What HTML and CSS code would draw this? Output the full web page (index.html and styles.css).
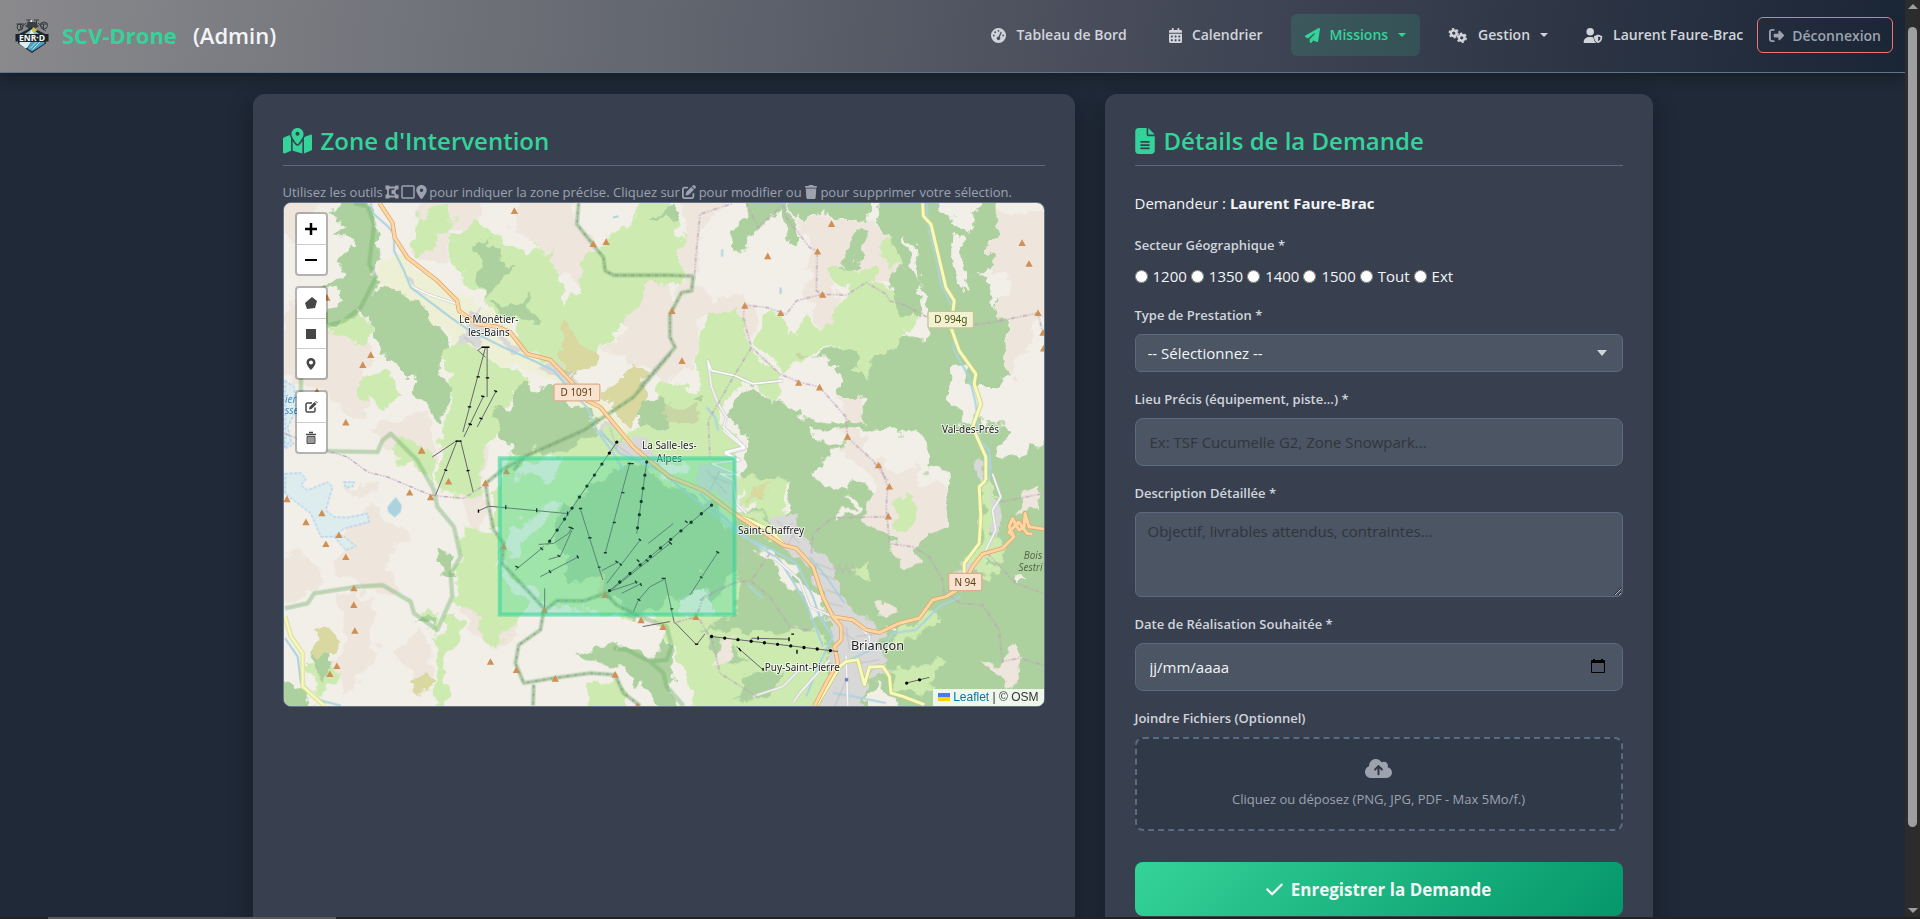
FILE: index.html
```html
<!DOCTYPE html>
<html lang="fr">
<head>
<meta charset="utf-8">
<meta name="viewport" content="width=device-width, initial-scale=1">
<title>SCV-Drone - Nouvelle mission</title>
<link rel="stylesheet" href="styles.css">
</head>
<body>

<div class="window">
<div class="page">

<header class="navbar">
  <a class="brand" href="#">
    <svg class="brand-logo" viewBox="0 0 68 70">
      <g stroke="#343a3c" stroke-width="2" fill="none">
        <path d="M3 12h15M22 4h10M38 4h10M50 12h15M11 12v9M57 12v9M22 10l-10 9M46 10l10 9M20 16h28M28 5v10M43 5v10M6 26l8-5M62 26l-8-5"/>
        <circle cx="10" cy="18" r="6"/><circle cx="58" cy="15" r="7"/>
      </g>
      <path fill="#394043" d="M25 8h18l3 9-6 5H28l-6-5z"/>
      <path fill="#eee" d="M31 4h3v4h-3z"/>
      <path fill="#202c33" d="M34 18L62 33v18L34 70 6 51V33z"/>
      <path fill="#8fb9b4" d="M34 22l19 13H15z"/>
      <path fill="#d4c13e" d="M36 18l9 6-7 5-5-4z"/>
      <path fill="#e8f4f2" d="M32 23l8 11-6-3-6 4z"/>
      <path fill="#d8eef0" d="M9 48h23l-7 11-4 2L9 52z"/>
      <path fill="#4aa0c0" d="M32 48h27v3L34 67l-9-6z"/>
      <path stroke="#b8e2ec" stroke-width="2" d="M30 61l13-13M35 63l15-15"/>
      <path fill="#1b2329" d="M1 32h66v15H1z"/>
      <text class="brand-mark" x="34" y="45">ENR·D</text>
    </svg>
    <span class="brand-name">SCV-Drone</span>
    <span class="brand-role">(Admin)</span>
  </a>
  <nav class="nav-links">
    <a class="nav-link" href="#">
      <svg class="icon" viewBox="0 0 512 512"><path d="M0 256a256 256 0 1 1 512 0A256 256 0 1 1 0 256zM288 96a32 32 0 1 0 -64 0 32 32 0 1 0 64 0zM256 416c35.3 0 64-28.7 64-64c0-17.4-6.9-33.1-18.1-44.6L366 161.7c5.3-12.1-.2-26.3-12.3-31.6s-26.3 .2-31.6 12.3L257.9 288c-.6 0-1.3 0-1.9 0c-35.3 0-64 28.7-64 64s28.7 64 64 64zM176 144a32 32 0 1 0 -64 0 32 32 0 1 0 64 0zM96 288a32 32 0 1 0 0-64 32 32 0 1 0 0 64zm352-32a32 32 0 1 0 -64 0 32 32 0 1 0 64 0z"/></svg>
      Tableau de Bord
    </a>
    <a class="nav-link" href="#">
      <svg class="icon" viewBox="0 0 448 512"><path d="M128 0c17.7 0 32 14.3 32 32V64H288V32c0-17.7 14.3-32 32-32s32 14.3 32 32V64h48c26.5 0 48 21.5 48 48v48H0V112C0 85.5 21.5 64 48 64H96V32c0-17.7 14.3-32 32-32zM0 192H448V464c0 26.5-21.5 48-48 48H48c-26.5 0-48-21.5-48-48V192zm64 80v32c0 8.8 7.2 16 16 16h32c8.8 0 16-7.2 16-16V272c0-8.8-7.2-16-16-16H80c-8.8 0-16 7.2-16 16zm128 0v32c0 8.8 7.2 16 16 16h32c8.8 0 16-7.2 16-16V272c0-8.8-7.2-16-16-16H208c-8.8 0-16 7.2-16 16zm144-16c-8.8 0-16 7.2-16 16v32c0 8.8 7.2 16 16 16h32c8.8 0 16-7.2 16-16V272c0-8.8-7.2-16-16-16H336zM64 400v32c0 8.8 7.2 16 16 16h32c8.8 0 16-7.2 16-16V400c0-8.8-7.2-16-16-16H80c-8.8 0-16 7.2-16 16zm144-16c-8.8 0-16 7.2-16 16v32c0 8.8 7.2 16 16 16h32c8.8 0 16-7.2 16-16V400c0-8.8-7.2-16-16-16H208zm112 16v32c0 8.8 7.2 16 16 16h32c8.8 0 16-7.2 16-16V400c0-8.8-7.2-16-16-16H336c-8.8 0-16 7.2-16 16z"/></svg>
      Calendrier
    </a>
    <a class="nav-link active" href="#">
      <svg class="icon" viewBox="0 0 512 512"><path d="M498.1 5.6c10.1 7 15.4 19.1 13.5 31.2l-64 416c-1.5 9.7-7.4 18.2-16 23s-18.9 5.4-28 1.6L284 427.7l-68.5 74.1c-8.9 9.7-22.9 12.9-35.2 8.1S160 493.2 160 480V396.4c0-4 1.5-7.8 4.2-10.7L331.8 202.8c5.8-6.3 5.6-16-.4-22s-15.7-6.4-22-.7L106 360.8 17.7 316.6C7.1 311.3 .3 300.7 0 288.9s5.9-22.8 16.1-28.7l448-256c10.7-6.1 23.9-5.5 34 1.4z"/></svg>
      Missions <span class="caret"></span>
    </a>
    <a class="nav-link" href="#">
      <svg class="icon icon-wide" viewBox="0 0 20 16">
        <g fill="none" stroke="currentColor">
          <circle cx="5.5" cy="5.5" r="3" stroke-width="2.6"/>
          <circle cx="5.5" cy="5.5" r="4.8" stroke-width="1.6" stroke-dasharray="2.5 2.5"/>
          <circle cx="14" cy="10.5" r="3" stroke-width="2.6"/>
          <circle cx="14" cy="10.5" r="4.8" stroke-width="1.6" stroke-dasharray="2.5 2.5"/>
        </g>
      </svg>
      Gestion <span class="caret"></span>
    </a>
    <a class="nav-link nav-user" href="#">
      <svg class="icon icon-wide" viewBox="0 0 640 512"><path d="M224 256A128 128 0 1 0 224 0a128 128 0 1 0 0 256zm-45.7 48C79.8 304 0 383.8 0 482.3C0 498.7 13.3 512 29.7 512H418c6 0 12-1 17-5-62-40-92-104-92-184l-75-19zM496 224l-124 50c-10 4-16 12-16 22 0 88 36 174 130 212 6 3 14 3 20 0 94-38 130-124 130-212 0-10-6-18-16-22zm0 62l82 33c-4 60-28 110-82 140z" fill-rule="evenodd"/></svg>
      <span>Laurent Faure-Brac</span>
    </a>
    <button class="logout" type="button">
      <svg class="icon" viewBox="0 0 512 512"><path d="M377.9 105.9L500.7 228.7c7.2 7.2 11.3 17.1 11.3 27.3s-4.1 20.1-11.3 27.3L377.9 406.1c-6.4 6.4-15 9.9-24 9.9c-18.7 0-33.9-15.2-33.9-33.9l0-62.1-128 0c-17.7 0-32-14.3-32-32l0-64c0-17.7 14.3-32 32-32l128 0 0-62.1c0-18.7 15.2-33.9 33.9-33.9c9 0 17.6 3.6 24 9.9zM160 96L96 96c-17.7 0-32 14.3-32 32l0 256c0 17.7 14.3 32 32 32l64 0c17.7 0 32 14.3 32 32s-14.3 32-32 32l-64 0c-53 0-96-43-96-96L0 128C0 75 43 32 96 32l64 0c17.7 0 32 14.3 32 32s-14.3 32-32 32z"/></svg>
      Déconnexion
    </button>
  </nav>
</header>

<main class="container">

  <section class="card">
    <h2 class="card-title">
      <svg class="title-icon" viewBox="0 0 576 512"><path d="M408 120c0 54.6-73.1 151.9-105.2 192c-7.7 9.6-22 9.6-29.6 0C241.1 271.9 168 174.6 168 120C168 53.7 221.7 0 288 0s120 53.7 120 120zm8 80.4c3.5-6.9 6.7-13.8 9.6-20.6c.5-1.2 1-2.5 1.5-3.7l116-46.4C558.9 123.4 576 135 576 152V422.8c0 9.8-6 18.6-15.1 22.3L416 503V200.4zM137.6 138.3c2.4 14.1 7.2 28.3 12.8 41.5c2.9 6.8 6.1 13.7 9.6 20.6V451.8L32.9 502.7C17.1 509 0 497.4 0 480.4V209.6c0-9.8 6-18.6 15.1-22.3l122.6-49zM327.8 332c13.9-17.4 35.7-45.7 56.2-77V504.3L192 449.4V255c20.5 31.3 42.3 59.6 56.2 77c20.5 25.6 59.1 25.6 79.6 0zM288 152a40 40 0 1 0 0-80 40 40 0 1 0 0 80z"/></svg>
      Zone d'Intervention
    </h2>
    <p class="help">Utilisez les outils
      <svg class="help-icon" viewBox="0 0 14 14"><path d="M3 2.500h9L8.500 7l3.500 4.500H3z" fill="none" stroke="currentColor" stroke-width="1.800"/><path d="M.5.5h4v4h-4zM10 .5h3.500v4H10zM.5 9.500h4v4h-4zM10 9.500h3.500v4H10zM6.500 5h4v4h-4z"/></svg>
      <svg class="help-icon" viewBox="0 0 14 14"><rect x="1" y="1" width="12" height="12" rx="1" fill="none" stroke="currentColor" stroke-width="1.5"/></svg>
      <svg class="help-icon narrow" viewBox="0 0 384 512"><path d="M215.7 499.2C267 435 384 279.4 384 192C384 86 298 0 192 0S0 86 0 192c0 87.4 117 243 168.3 307.2c12.3 15.3 35.1 15.3 47.4 0zM192 128a64 64 0 1 1 0 128 64 64 0 1 1 0-128z"/></svg>
      pour indiquer la zone précise. Cliquez sur
      <svg class="help-icon" viewBox="0 0 512 512"><path d="M471.6 21.7c-21.9-21.9-57.3-21.9-79.2 0L362.3 51.7l97.9 97.9 30.1-30.1c21.9-21.9 21.9-57.3 0-79.2L471.6 21.7zm-299.2 220c-6.1 6.1-10.8 13.6-13.5 21.9l-29.6 88.8c-2.9 8.6-.6 18.1 5.8 24.6s15.9 8.7 24.6 5.8l88.8-29.6c8.2-2.7 15.7-7.4 21.9-13.5L437.7 172.3 339.7 74.3 172.4 241.7zM96 64C43 64 0 107 0 160V416c0 53 43 96 96 96H352c53 0 96-43 96-96V320c0-17.7-14.3-32-32-32s-32 14.3-32 32v96c0 17.7-14.3 32-32 32H96c-17.7 0-32-14.3-32-32V160c0-17.7 14.3-32 32-32h96c17.7 0 32-14.3 32-32s-14.3-32-32-32H96z"/></svg>
      pour modifier ou
      <svg class="help-icon" viewBox="0 0 448 512"><path d="M135.2 17.7L128 32H32C14.3 32 0 46.3 0 64S14.3 96 32 96H416c17.7 0 32-14.3 32-32s-14.3-32-32-32H320l-7.2-14.3C307.4 6.8 296.3 0 284.2 0H163.8c-12.1 0-23.2 6.8-28.6 17.7zM416 128H32L53.2 467c1.6 25.3 22.6 45 47.9 45H346.9c25.3 0 46.3-19.7 47.9-45L416 128z"/></svg>
      pour supprimer votre sélection.</p>

    <div class="map">
      <svg class="map-tiles" viewBox="0 0 2286 1515" preserveAspectRatio="xMinYMin slice">
        <defs>
          <filter id="rough" x="0" y="0" width="1" height="1" color-interpolation-filters="sRGB">
            <feTurbulence type="fractalNoise" baseFrequency="0.018" numOctaves="4" seed="7"/>
            <feDisplacementMap in="SourceGraphic" scale="70" xChannelSelector="R" yChannelSelector="G"/>
          </filter>
        </defs>
        <rect width="2286" height="1515" fill="#f2efe9"/>

        <g filter="url(#rough)">
        <!-- land cover, north west -->
        <g transform="translate(-99 -336)">
          <path fill="#eee5dc" d="M500 306L690 306 700 440 600 400 590 500 540 520 480 480 520 420zM820 306L960 306 975 400 1060 520 1080 560 1000 610 960 540 900 560 860 470 780 400zM72 306L220 306 180 420 140 440 72 420zM110 620L240 720 330 740 360 800 340 860 380 920 300 980 220 900 72 860zM360 1010L540 960 560 1140 430 1100zM1100 560L1260 560 1260 900 1190 820 1080 800 1060 760 1130 720z"/>
          <path fill="#eef0d5" d="M390 500L450 490 520 550 600 600 660 620 740 670 830 770 900 795 980 860 1080 950 1160 1060 1260 1120 1260 1140 1060 1100 960 900 860 850 760 820 640 780 580 720 480 630 380 590z"/>
          <path fill="#cdebb0" d="M600 420L690 400 740 440 830 490 850 460 880 500 910 470 920 560 950 640 1000 590 1060 600 1100 720 1040 780 960 850 900 800 840 790 800 700 740 680 700 620 640 560 600 540 595 470zM1000 500L1080 440 1160 380 1180 306 1260 306 1260 560 1180 580 1130 700 1050 730 980 680zM560 780L620 750 700 780 760 820 830 870 780 930 740 1020 700 1080 620 1140 560 1060 600 960 600 860zM480 400L560 350 600 340 600 400 560 450 500 500zM230 720L330 660 360 720 330 780 290 740zM320 880L410 840 450 900 400 950 330 930z"/>
          <path fill="#add19e" d="M240 380L290 306 350 306 370 400 400 490 360 540 390 570 340 640 300 700 230 710 200 680 280 620 210 580 290 560 260 500 320 470 250 430 300 410zM330 620L380 600 460 600 540 680 590 760 560 860 600 890 580 990 500 920 480 860 400 780 350 700zM730 950L780 960 800 870 880 890 1010 960 1070 1040 1000 1070 900 1110 820 1140 770 1060zM670 470L715 445 760 480 740 520 795 530 730 570 710 620 680 590 690 510zM720 620L790 660 850 600 830 660 860 690 770 690z"/>
          <path fill="#d8d8a0" d="M940 710L980 730 1010 780 1050 800 1020 850 960 840 925 770zM1080 890L1150 810 1195 850 1170 960 1130 1010 1075 930z"/>
          <path fill="#d9d8d8" d="M655 650L690 645 720 690 770 740 820 770 810 790 760 760 690 740 640 770 620 740 665 710zM900 810L960 830 990 870 960 880 900 850 850 830zM455 555L490 570 495 600 470 590zM1040 1010L1080 1000 1150 1050 1190 1110 1140 1140 1070 1060z"/>
        </g>

        <!-- land cover, north east -->
        <g transform="translate(1071 -156)">
          <path fill="#eee5dc" d="M130 126L280 126 180 250 180 400 230 450 310 430 340 470 330 600 240 480 180 500 170 640 100 700 60 560 110 430 130 370zM470 210L540 205 700 210 760 260 820 210 860 400 840 440 740 380 700 400 600 390 590 520 540 540 490 430 520 300z"/>
          <path fill="#cdebb0" d="M0 126L100 190 110 240 135 260 120 390 0 370zM210 480L300 480 320 560 340 600 430 680 400 750 300 700 250 760 260 830 310 890 180 990 0 990 0 830 60 700 180 720 175 570zM340 570L380 480 440 510 460 560 500 500 540 545 620 430 700 370 760 420 820 480 810 560 740 640 690 640 675 690 640 650 600 590 520 600 500 640 430 670zM570 360L620 340 660 350 700 360 715 400 660 410 600 400z"/>
          <path fill="#add19e" d="M320 126L430 126 480 250 460 285 440 260 430 170 355 230 300 300 275 240 320 190zM430 126L700 126 690 210 560 200 470 205zM600 350L640 250 690 240 670 320 630 350zM720 126L1090 126 1090 190 1060 230 1050 330 1100 520 1110 600 1120 690 1010 710 930 660 960 830 1110 820 1250 890 1250 990 920 990 860 880 760 830 670 830 680 740 600 730 590 640 520 610 600 590 650 600 640 650 675 690 690 640 800 570 870 570 840 500 790 480 750 400 760 370 790 350 770 300 715 210zM270 800L320 720 480 780 490 840 600 960 640 990 300 990 340 880zM0 760L80 730 90 800 60 860 0 860zM30 200L100 170 110 190 90 210zM160 740L200 735 190 770z"/>
          <path fill="#f2efe9" d="M790 250L830 300 850 420 875 560 850 570 830 460 850 410 820 340zM945 250L975 260 985 400 1000 420 960 420 945 330zM920 126L1030 126 990 240 900 190zM1000 370L1060 330 1100 400 1060 480 1050 380zM930 660L980 640 1005 780 960 820 930 740zM1020 710L1140 690 1200 660 1250 660 1250 780 1080 810 1060 760z"/>
          <path fill="#eee5dc" d="M1090 190L1250 180 1250 500 1180 520 1150 620 1120 690 1100 640 1110 520 1060 500 1100 400 1050 320 1060 230zM600 740L660 730 690 860 860 850 800 900 860 1020 740 1010 690 940 620 860z"/>
          <path fill="#f2efe9" d="M1060 360L1100 350 1110 430 1070 450zM750 880L830 870 860 960 780 960zM500 700L600 750 610 850 530 830 480 740 430 700z"/>
          <path fill="#cdebb0" d="M725 250L750 260 780 320 790 350 750 360 730 300z"/>
          <path fill="#c8d5a4" d="M70 770L180 765 170 800 130 825 90 800zM475 610L510 605 500 622 478 620z"/>
        </g>

        <!-- land cover, south west -->
        <g transform="translate(-39 684)">
          <path fill="#eee5dc" d="M230 290L300 210 330 250 420 320 370 340 360 420 400 500 290 480 190 440 220 360zM200 500L260 480 310 520 290 600 320 640 240 800 180 700 240 640zM370 680L440 600 480 610 480 740 430 740zM580 520L740 530 730 600 700 650 640 640 590 600zM12 380L100 370 160 440 90 510 12 530zM500 60L660 60 640 160 640 300 600 320 580 200zM220 170L330 160 320 200 240 200z"/>
          <path fill="#cdebb0" d="M550 310L660 300 690 350 680 400 700 450 780 520 760 560 700 600 690 650 650 640 600 540 550 510 545 430 580 380zM500 610L560 540 580 600 530 700 520 860 490 860zM340 50L440 30 490 70 490 160 430 90 390 110zM520 50L640 40 640 180 600 200 520 200 500 160zM660 180L720 80 1000 0 1401 0 1401 560 1100 560 830 530 700 400 670 260zM1180 560L1401 560 1401 860 1280 860 1230 700zM950 760L1040 740 1100 860 960 860zM100 720L200 680 200 760 150 800zM450 560L490 540 500 600z"/>
          <path fill="#add19e" d="M990 150L1060 100 1130 110 1180 150 1290 190 1401 290 1401 420 1310 540 1200 500 1150 540 1100 560 1010 500 990 440 900 440 870 400 900 370 840 330 880 220 950 190zM930 660L1030 640 1140 690 1200 620 1215 680 1190 740 1250 860 1180 860 1120 760 1090 780 1070 720 1000 710zM12 740L100 770 150 860 12 860zM130 620L180 640 200 700 160 760 110 700zM500 360L540 370 545 440 510 430zM440 560L490 560 480 590zM800 60L930 0 970 0 880 60 820 80z"/>
          <path fill="#d8d8a0" d="M130 590L170 600 210 640 150 680 120 690zM410 740L490 740 480 800 440 790zM990 430L1010 440 1000 500 980 480z"/>
          <path fill="#f2efe9" d="M750 90L880 90 850 150 740 140zM700 340L780 240 880 220 800 300 720 400zM1240 500L1330 480 1330 555 1240 555zM1160 90L1250 110 1220 150 1170 130z"/>
          <path fill="#d9d8d8" d="M1040 30L1080 20 1180 90 1150 110 1080 80zM1290 120L1380 130 1401 230 1330 200 1280 150z"/>
        </g>

        <!-- land cover, south east -->
        <g transform="translate(1251 684)">
          <path fill="#add19e" d="M130 -30L835 -20 860 60 900 100 950 90 1000 80 1075 50 1075 861 600 861 300 861 0 600 110 560 110 240 270 250 280 130 180 100z"/>
          <path fill="#cdebb0" d="M110 130L200 150 270 140 250 260 180 250 120 200zM110 240L200 260 280 300 320 370 250 360zM0 600L240 610 350 600 400 680 340 861 0 861zM560 650L690 540 715 560 680 600 640 630 560 680zM560 720L740 700 690 760 720 780 600 780zM870 130L900 200 870 300 920 390 880 430 790 440 800 390 850 340 850 180zM460 420L500 390 515 450 490 450zM30 430L0 420 0 410z"/>
          <path fill="#add19e" d="M20 640L60 620 80 660 150 680 60 700zM120 740L250 720 200 800 120 820zM860 380L900 400 880 420z"/>
          <path fill="#f2efe9" d="M330 0L640 0 690 60 680 120 750 140 740 250 650 300 620 280 560 200 480 150 450 190 400 150 370 160 330 140 360 100 400 90 400 60 440 50 350 30zM400 250L460 240 420 200 480 220 460 260 400 275zM160 370L200 360 300 430 380 550 340 570 300 480zM950 -20L1075 -20 1075 20 950 80 890 65zM960 430L1000 460 960 460zM500 800L540 750 580 800 640 861 500 861z"/>
          <path fill="#eee5dc" d="M400 0L460 0 500 20 500 80 560 100 600 150 640 100 670 160 740 180 740 290 680 310 650 360 660 410 600 400 560 350 600 340 500 260 520 150 450 80zM540 510L560 490 600 560 540 550zM830 690L900 700 950 650 970 740 930 770 900 740zM970 190L1020 180 1010 240 955 245zM40 660L90 625 95 680 50 715z"/>
          <path fill="#cdebb0" d="M580 210L620 195 670 220 650 280 600 305z"/>
          <path fill="#d8d8a0" d="M165 175L210 165 190 200 180 215 145 205z"/>
          <path fill="#d9d8d8" d="M210 255L280 260 330 340 390 400 440 520 470 560 560 600 540 640 560 730 500 760 480 861 350 861 400 700 390 560 340 420 270 370zM0 110L80 120 110 200 110 240 60 210zM750 440L810 400 840 430 760 470zM880 180L910 300 890 330 870 240zM835 100L860 110 850 200 838 160z"/>
        </g>
        </g>

        <!-- lakes and glaciers -->
        <g transform="translate(-39 684)">
          <path fill="#aad3df" d="M350 230L375 200 393 225 390 245 372 262 352 245z"/>
          <path fill="#ddecec" stroke="#94c4f4" stroke-width="3" stroke-dasharray="9 5" d="M42 130L90 128 105 145 90 165 110 180 170 155 185 170 165 240 190 260 230 262 290 250 295 275 220 295 190 320 150 320 120 250 42 190zM192 322L215 315 255 348 225 360zM218 155L250 155 245 170 225 172zM42 20L70 40 42 55z"/>
          <path transform="translate(-60 -1020)" fill="#ddecec" stroke="#94c4f4" stroke-width="3" stroke-dasharray="9 5" d="M102 870L130 890 135 960 110 1010 120 1050 102 1070z"/>
        </g>

        <!-- rivers -->
        <g class="river">
          <path transform="translate(-99 -336)" d="M360 336L365 365 410 405 430 430 430 480 460 540 480 590 560 650 600 680 650 715 760 770 860 815 910 840 960 900 1010 950 1040 1020 1090 1090 1120 1140M1088 380L1105 376"/>
          <path transform="translate(1071 -156)" d="M860 156L870 240 890 320 905 400 940 470 945 600 990 680 1010 760 1020 860 1050 930 1050 990M247 295V318M423 410V430M200 770L225 800 235 840"/>
          <path transform="translate(-39 684)" d="M990 0L1050 70 1170 120 1240 180 1330 250 1401 310M42 625L80 680 90 760 140 810 210 828"/>
          <path transform="translate(1251 684)" d="M0 190L70 260 130 320 220 360 290 400 340 500 360 560 400 620 360 700 320 800M40 230L150 330 240 390 320 520 370 650M330 380L380 440 435 520M785 500L720 530 690 560 650 600 580 610 560 640 450 690M835 20L870 60 875 120M145 465L190 505M400 790L460 800 560 820"/>
        </g>

        <!-- minor roads -->
        <g class="road-casing">
          <path transform="translate(1071 -156)" d="M203 628L215 660 285 675 340 700 430 690M203 628L215 710 235 760 260 800 250 830 315 890 255 905 300 930"/>
          <path transform="translate(1251 684)" d="M70 0L135 55 75 70 120 90 35 100 120 135 60 130 100 150 110 220 140 250M220 380L300 450 330 530 400 560M880 130L905 200 880 240 890 300 860 360M160 800L250 770 320 700M280 820L300 790 390 690M480 590L510 620 512 650M440 675L445 831M590 600L560 590"/>
          <path transform="translate(-99 -336)" d="M490 590L530 610 620 640M950 865L970 845"/>
        </g>
        <g class="road-minor">
          <path transform="translate(1071 -156)" d="M203 628L215 660 285 675 340 700 430 690M203 628L215 710 235 760 260 800 250 830 315 890 255 905 300 930"/>
          <path transform="translate(1251 684)" d="M70 0L135 55 75 70 120 90 35 100 120 135 60 130 100 150 110 220 140 250M220 380L300 450 330 530 400 560M880 130L905 200 880 240 890 300 860 360M160 800L250 770 320 700M280 820L300 790 390 690M480 590L510 620 512 650M440 675L445 831M590 600L560 590"/>
          <path transform="translate(-99 -336)" d="M490 590L530 610 620 640M950 865L970 845"/>
        </g>
        <g class="street">
          <path transform="translate(1251 684)" d="M230 270L300 340M250 300L280 280M290 300L260 350M350 400L400 420M360 430L410 450M380 480L440 500M390 520L430 530M420 600L480 640M440 590L450 660M470 620L540 610M480 700L540 690M500 740L540 700M20 120L80 190M40 140L90 160M60 120L30 180M400 405L410 430 420 405 430 430 440 405 450 430 460 405 470 430M405 831L445 740"/>
          <path transform="translate(-99 -336)" d="M660 660L700 700M690 650L670 690M640 740L670 760M910 820L970 860M930 840L980 850M1050 1030L1150 1100M1080 1010L1100 1080M1120 1040L1090 1080"/>
        </g>

        <!-- park and administrative limits -->
        <g class="park">
          <path transform="translate(-99 -336)" d="M310 336L350 345 370 400 355 520 375 560 330 650 280 690 230 705M150 860V1000M985 336L980 400 1060 500 1065 540 1090 553 1260 553M1260 790L1150 920 1000 1020 820 1100 790 1140"/>
          <path transform="translate(1071 -156)" d="M90 373L160 376 155 420 125 425 90 490 90 560 105 590 0 710"/>
          <path transform="translate(-39 684)" d="M170 62L320 65 335 30 360 10 440 90 490 180 500 230 550 290 570 380 540 430 545 500 500 600 430 550 420 515 335 465 260 470 130 490 110 520 42 535M760 85L700 115 645 160 655 230 670 300 700 340 695 400 770 480 825 540 860 512 940 513 1005 490 1040 525 1110 560 1190 590 1205 650 1190 690 1140 695 1070 660 1030 655M820 545L810 600 745 645 735 700 760 760 850 745 960 730 1035 735 1060 790 1110 828M790 765L788 828M1140 695L1180 730 1190 770 1240 828"/>
        </g>
        <g class="limit-dark">
          <path transform="translate(-99 -336)" d="M985 336L980 400 1060 500 1065 540 1090 553 1260 553M1260 790L1150 920 1000 1020 820 1100 790 1140"/>
          <path transform="translate(1071 -156)" d="M90 373L160 376 155 420 125 425 90 490 90 560 105 590 0 710"/>
          <path transform="translate(-39 684)" d="M760 85L700 115 645 160 655 230 670 300 700 340 695 400 770 480 825 540 860 512 940 513 1005 490 1040 525 1110 560M820 545L810 600 745 645 735 700 760 760 850 745 960 730 1035 735 1060 790 1110 828M790 765L788 828"/>
        </g>
        <g class="limit">
          <path transform="translate(1071 -156)" d="M163 370L180 190 280 156M320 156L355 230 430 160 440 200 510 290 533 300 530 420 549 430 620 433 680 395 740 430 750 450 800 465 865 500M549 430L470 450 440 490 380 470 315 463 310 500 335 590 420 670 480 695 540 710 620 800 622 860 700 930 745 990M335 590L280 680 205 810 210 920M1005 522L1060 515 1196 487 1210 540"/>
          <path transform="translate(1251 684)" d="M540 100L565 170 560 230 570 340 640 350 690 380 730 450 735 500M335 370L340 310 400 262 565 260M740 490L785 520 850 525 900 600 910 695 960 685 1032 705M865 370L950 460 1032 490M905 215L1032 190M210 370L155 450 100 460 0 510M155 455L210 500 270 590 350 605M0 570L40 640 60 730 170 800"/>
          <path transform="translate(-39 684)" d="M42 10L170 62 230 80 290 125 350 140 480 195 580 205 640 165M1401 455L1300 500 1280 560 1210 580"/>
        </g>

        <!-- main roads -->
        <g class="road-yellow-casing">
          <path transform="translate(1071 -156)" d="M850 156L852 195 875 220 920 410 945 450 935 530 960 600 1010 670 1005 700 1025 760 1000 830 1040 920 1040 990"/>
          <path transform="translate(1251 684)" d="M860 150L840 170 845 260 840 340 795 400 795 430M420 710L440 695 475 690 495 765 510 712 550 710 570 740 575 790 610 800 675 825M100 250L160 275 210 300 250 340M420 710L350 828"/>
          <path transform="translate(-39 684)" d="M42 560L60 620 95 670 95 770 160 828"/>
        </g>
        <g class="road-yellow">
          <path transform="translate(1071 -156)" d="M850 156L852 195 875 220 920 410 945 450 935 530 960 600 1010 670 1005 700 1025 760 1000 830 1040 920 1040 990"/>
          <path transform="translate(1251 684)" d="M860 150L840 170 845 260 840 340 795 400 795 430M420 710L440 695 475 690 495 765 510 712 550 710 570 740 575 790 610 800 675 825M100 250L160 275 210 300 250 340M420 710L350 828"/>
          <path transform="translate(-39 684)" d="M42 560L60 620 95 670 95 770 160 828"/>
        </g>
        <g class="road-orange-casing">
          <path d="M287 0L326 59 333 104 371 164 461 234 521 294 526 324 581 364 641 372 681 389 731 454 801 472 861 534 911 594 951 614 1051 734 1081 760 1161 824 1261 864 1362 940 1501 1029 1541 1039 1591 1094 1621 1184 1651 1244 1711 1254 1751 1284 1791 1292 1851 1264 1911 1249 1951 1194 1991 1184 2041 1154 2071 1094 2101 1056 2161 1039 2196 1004 2181 974 2191 949 2211 984 2226 974 2229 934 2241 974 2286 981M2196 1004L2180 990 2210 960 2235 994 2251 996M1651 1244L1676 1274 1676 1314 1656 1334 1666 1384 1631 1444 1596 1512"/>
        </g>
        <g class="road-orange">
          <path d="M287 0L326 59 333 104 371 164 461 234 521 294 526 324 581 364 641 372 681 389 731 454 801 472 861 534 911 594 951 614 1051 734 1081 760 1161 824 1261 864 1362 940 1501 1029 1541 1039 1591 1094 1621 1184 1651 1244 1711 1254 1751 1284 1791 1292 1851 1264 1911 1249 1951 1194 1991 1184 2041 1154 2071 1094 2101 1056 2161 1039 2196 1004 2181 974 2191 949 2211 984 2226 974 2229 934 2241 974 2286 981M2196 1004L2180 990 2210 960 2235 994 2251 996M1651 1244L1676 1274 1676 1314 1656 1334 1666 1384 1631 1444 1596 1512"/>
        </g>

        <!-- ski lifts -->
        <g class="lift">
          <path transform="translate(-39 684)" d="M1040 35L830 345M1130 95L1100 310M1325 225L1012 487M1080 95L1005 370M655 228L890 250M655 228L622 243M930 235L998 450M735 420L820 350M810 440L925 380M1010 460L1110 330M1055 490L1115 460M1015 487L1200 340M995 422L1045 395M1015 485L1105 455M1090 545L1105 510 1140 470 1185 447 1212 575 1280 645 1305 612M1260 495L1345 365M823 475L823 540M805 343L850 340 895 310 905 290M835 388L870 378 905 300M1118 590L1200 575M485 80L560 30 495 195M570 30L608 185M1135 340L1210 280"/>
          <path transform="translate(-99 -336)" d="M705 770L637 1025M710 770L710 920M700 915L640 1040M738 900L680 1010M680 780L695 770H715M705 800L683 780"/>
          <path transform="translate(1251 684)" d="M35 620L415 665M110 650L190 720M620 760L690 743M155 625L270 628"/>
        </g>
        <g class="pylon">
          <path transform="translate(-39 684)" d="M1040 35L830 345M1130 95L1100 310M1325 225L1012 487"/>
          <path transform="translate(1251 684)" d="M35 620L415 665M622 760L690 743"/>
        </g>
        <path class="tick" transform="translate(-39 684)" d="M1073 100h18M1054 187h9M1028 277h9M1001 368h9M706 225v12M799 234v12M892 244v12M624 238v10M926 235h10M954 323h10M983 411h8M735 408l10 5M810 352l8 8M836 420l6 9M920 376l5 9M1106 326l7 6M1048 400l7 6M1196 334l10 9M1127 388l8 7M1100 388l8 7M1095 452l5 8M1110 460l5 8M1102 507l9 5M1175 445h12M1201 537h9M1275 643h10M1290 440l8 4M1339 364l9 5M862 375l8 5M895 290l15 6M521 118l9 3M588 122l9-2M555 32h18M1036 392l8 7M1245 272l8 6"/>
        <path class="tick" transform="translate(-99 -336)" d="M693 770h24M678 859h10M706 862h10M652 949h10M692 916l10 3M654 1000l10 3M731 900l9 4M687 982l9 4"/>
        <path class="tick" transform="translate(1251 684)" d="M175 620v10M268 622v12M275 613h8M292 660v12M117 655l6 9M190 715v8"/>
        <path fill="#7080b8" d="M1687 1429h10v10h-10z"/>

        <!-- summits -->
        <g fill="#d08f55">
          <path transform="translate(-99 -336)" d="M792 349l11 20h-22zM1029 448l11 20h-22zM1068 442l11 20h-22zM360 782l11 20h-22zM336 812l11 20h-22zM198 892l11 20h-22zM285 985l11 20h-22zM513 1069l11 20h-22zM228 610l11 20h-22z"/>
          <path transform="translate(1071 -156)" d="M576 208l11 20h-22zM534 291l11 20h-22zM384 305l11 20h-22zM549 421l11 20h-22zM315 454l11 20h-22zM423 476l11 20h-22zM96 470l11 20h-22zM126 620l11 20h-22zM477 686l11 20h-22zM540 700l11 20h-22zM624 848l11 20h-22zM717 934l11 20h-22zM1149 265l11 20h-22zM1170 328l11 20h-22zM1197 476l11 20h-22zM1212 535l11 20h-22zM1214 583l11 20h-22z"/>
          <path transform="translate(-39 684)" d="M453 50l11 20h-22zM534 143l11 20h-22zM645 148l11 20h-22zM708 112l11 20h-22zM417 176l11 20h-22zM480 190l11 20h-22zM48 196l11 20h-22zM153 238l11 20h-22zM105 265l11 20h-22zM204 304l11 20h-22zM165 331l11 20h-22zM225 370l11 20h-22zM249 464l11 20h-22zM249 514l11 20h-22zM252 592l11 20h-22zM198 698l11 20h-22zM177 722l11 20h-22zM660 685l11 20h-22zM738 710l11 20h-22zM855 736l11 20h-22zM1035 724l11 20h-22zM1005 484l11 20h-22zM822 530l11 20h-22zM699 338l11 20h-22zM1113 560l11 20h-22zM1179 580l11 20h-22zM1278 550l11 20h-22zM1102 818l11 20h-22z"/>
          <path transform="translate(1251 684)" d="M570 158l11 20h-22zM567 248l11 20h-22z"/>
        </g>

        <!-- labels -->
        <g class="place">
          <text x="616" y="362">Le Monêtier-</text>
          <text x="616" y="401">les-Bains</text>
          <text x="1159" y="741">La Salle-les-</text>
          <text x="1159" y="780">Alpes</text>
          <text x="2065" y="691">Val-des-Prés</text>
          <text x="1465" y="996">Saint-Chaffrey</text>
          <text x="1559" y="1408">Puy-Saint-Pierre</text>
          <text class="town" x="1785" y="1344">Briançon</text>
        </g>
        <g class="area-name">
          <text x="2225" y="1071">Bois</text>
          <text x="2209" y="1106">Sestri</text>
        </g>
        <g class="glacier-name">
          <text x="3" y="602">ier</text>
          <text x="3" y="636">sse</text>
        </g>
        <g class="shield">
          <rect x="812" y="545" width="138" height="50" rx="5"/>
          <text x="881" y="581">D 1091</text>
          <rect x="1999" y="1114" width="100" height="52" rx="5"/>
          <text x="2049" y="1151">N 94</text>
        </g>
        <g class="shield shield-yellow">
          <rect x="1937" y="326" width="137" height="50" rx="5"/>
          <text x="2006" y="362">D 994g</text>
        </g>

        <rect class="selection" x="649" y="768" width="706" height="470"/>
      </svg>

      <div class="map-controls">
        <div class="map-bar">
          <button type="button" title="Zoom avant"><svg viewBox="0 0 14 14"><path d="M1 7h12M7 1v12" stroke="#000" stroke-width="2.5"/></svg></button>
          <button type="button" title="Zoom arrière"><svg viewBox="0 0 14 14"><path d="M1 7h12" stroke="#000" stroke-width="2"/></svg></button>
        </div>
        <div class="map-bar">
          <button type="button" title="Polygone"><svg viewBox="0 0 14 14"><path d="M8 1l5 4-2 7-8 1-2-6z" fill="#464646"/></svg></button>
          <button type="button" title="Rectangle"><svg viewBox="0 0 14 14"><path d="M2 2h10v10H2z" fill="#464646"/></svg></button>
          <button type="button" title="Marqueur"><svg viewBox="0 0 14 14"><path d="M7 1a4.500 4.500 0 0 0-4.500 4.500C2.500 8.500 7 13 7 13s4.500-4.500 4.500-7.500A4.500 4.500 0 0 0 7 1zm0 2.500a2 2 0 1 1 0 4 2 2 0 0 1 0-4z" fill="#464646"/></svg></button>
        </div>
        <div class="map-bar">
          <button type="button" title="Modifier"><svg viewBox="0 0 14 14"><path d="M8 3H3.500Q2 3 2 4.500v6Q2 12 3.500 12h6q1.500 0 1.500-1.500V7.500" fill="none" stroke="#464646" stroke-width="1.5"/><path d="M5 9.500l.5-2.500L10.500 2l2 2-5 5z" fill="#464646"/><path d="M11.500 1l2 2" stroke="#464646"/></svg></button>
          <button type="button" title="Supprimer"><svg viewBox="0 0 14 14"><path d="M5 1.500h4M2 3.500h10" stroke="#464646" stroke-width="1.5"/><path d="M3 5.500h8v7H3z" fill="#999" stroke="#555"/></svg></button>
        </div>
      </div>

      <div class="attribution">
        <svg class="flag" viewBox="0 0 12 8"><path fill="#4c7be1" d="M0 0h12v4H0z"/><path fill="#ffd500" d="M0 4h12v4H0z"/></svg>
        <a href="#">Leaflet</a> | © OSM
      </div>
    </div>
  </section>

  <section class="card">
    <h2 class="card-title">
      <svg class="title-icon title-icon-file" viewBox="0 0 384 512"><path fill-rule="evenodd" d="M64 0C28.7 0 0 28.7 0 64V448c0 35.3 28.7 64 64 64H320c35.3 0 64-28.7 64-64V160H256c-17.7 0-32-14.3-32-32V0H64zM256 0V128H384L256 0zM112 256H272c8.8 0 16 7.2 16 16s-7.2 16-16 16H112c-8.8 0-16-7.2-16-16s7.2-16 16-16zm0 64H272c8.8 0 16 7.2 16 16s-7.2 16-16 16H112c-8.8 0-16-7.2-16-16s7.2-16 16-16zm0 64H272c8.8 0 16 7.2 16 16s-7.2 16-16 16H112c-8.8 0-16-7.2-16-16s7.2-16 16-16z"/></svg>
      Détails de la Demande
    </h2>

    <form class="request">
      <p class="requester">Demandeur : <strong>Laurent Faure-Brac</strong></p>

      <fieldset class="field">
        <legend class="label">Secteur Géographique *</legend>
        <div class="radios">
          <label><input type="radio" name="secteur"> 1200</label>
          <label><input type="radio" name="secteur"> 1350</label>
          <label><input type="radio" name="secteur"> 1400</label>
          <label><input type="radio" name="secteur"> 1500</label>
          <label><input type="radio" name="secteur"> Tout</label>
          <label><input type="radio" name="secteur"> Ext</label>
        </div>
      </fieldset>

      <div class="field">
        <label class="label" for="type">Type de Prestation *</label>
        <div class="select-wrap">
          <select class="control select" id="type">
            <option>-- Sélectionnez --</option>
          </select>
        </div>
      </div>

      <div class="field">
        <label class="label" for="lieu">Lieu Précis (équipement, piste...) *</label>
        <input class="control" type="text" id="lieu" placeholder="Ex: TSF Cucumelle G2, Zone Snowpark...">
      </div>

      <div class="field">
        <label class="label" for="description">Description Détaillée *</label>
        <textarea class="control textarea" id="description" placeholder="Objectif, livrables attendus, contraintes..."></textarea>
      </div>

      <div class="field">
        <label class="label" for="date">Date de Réalisation Souhaitée *</label>
        <div class="date-wrap">
          <input class="control date" type="text" id="date" placeholder="jj/mm/aaaa">
          <button class="date-button" type="button" title="Choisir une date">
            <svg viewBox="0 0 14 16"><path fill="#000" fill-rule="evenodd" d="M2 1h2v1h6V1h2v1h1q1 0 1 1v11q0 1-1 1H1q-1 0-1-1V3q0-1 1-1h1zM1 5v9h12V5z"/></svg>
          </button>
        </div>
      </div>

      <div class="field">
        <label class="label" for="files">Joindre Fichiers (Optionnel)</label>
        <label class="dropzone" for="files">
          <svg class="cloud" viewBox="0 32 640 448"><path d="M144 480C64.5 480 0 415.5 0 336c0-62.8 40.2-116.2 96.2-135.9c-.1-2.7-.2-5.4-.2-8.1c0-88.4 71.6-160 160-160c59.3 0 111 32.2 138.7 80.2C409.9 102 428.3 96 448 96c53 0 96 43 96 96c0 12.2-2.3 23.8-6.4 34.6C596 238.4 640 290.1 640 352c0 70.7-57.3 128-128 128H144zm79-217c-9.4 9.4-9.4 24.6 0 33.9s24.6 9.4 33.9 0l39-39V392c0 13.3 10.7 24 24 24s24-10.7 24-24V257.9l39 39c9.4 9.4 24.6 9.4 33.9 0s9.4-24.6 0-33.9l-80-80c-9.4-9.4-24.6-9.4-33.9 0l-80 80z"/></svg>
          Cliquez ou déposez (PNG, JPG, PDF - Max 5Mo/f.)
        </label>
        <input type="file" id="files" multiple hidden>
      </div>

      <button class="submit" type="submit">
        <svg class="check" viewBox="0 0 448 512"><path d="M438.6 105.4c12.5 12.5 12.5 32.8 0 45.3l-256 256c-12.5 12.5-32.8 12.5-45.3 0l-128-128c-12.5-12.5-12.5-32.8 0-45.3s32.8-12.5 45.3 0L160 338.7 393.4 105.4c12.5-12.5 32.8-12.5 45.3 0z"/></svg>
        Enregistrer la Demande
      </button>
    </form>
  </section>

</main>
</div>

<div class="scrollbar">
  <span class="arrow arrow-up"></span>
  <span class="thumb"></span>
  <span class="arrow arrow-down"></span>
</div>
</div>

<div class="taskbar"><span class="taskbar-item"></span></div>

</body>
</html>
```

FILE: styles.css
```css
* {
  box-sizing: border-box;
}

body {
  margin: 0;
  height: 100vh;
  display: flex;
  flex-direction: column;
  overflow: hidden;
  background: #1f2937;
  color: #f3f4f6;
  font-family: "Open Sans", "Noto Sans", sans-serif;
  font-size: 15px;
  line-height: 24px;
}

button, input, select, textarea {
  font-family: inherit;
  font-size: inherit;
  color: inherit;
}

button {
  cursor: pointer;
}

a {
  text-decoration: none;
}

.window {
  flex: 1;
  min-height: 0;
  display: flex;
}

.page {
  flex: 1;
  overflow: hidden;
}

/* navbar */
.navbar {
  position: relative;
  display: flex;
  align-items: center;
  justify-content: space-between;
  height: 73px;
  padding: 0 12px 2px 15px;
  background: linear-gradient(97deg, #8a8a8d 0%, #5d616b 40%, #434857 62%, #1a2535 100%);
  border-bottom: 1px solid #64748b;
  box-shadow: 0 4px 12px rgba(0, 0, 0, 0.3);
}

.brand {
  display: flex;
  align-items: center;
  font-size: 22px;
  font-weight: 700;
}

.brand-logo {
  width: 34px;
  height: 35px;
  margin-right: 13px;
}

.brand-mark {
  fill: #fff;
  font-size: 17px;
  font-weight: 700;
  text-anchor: middle;
}

.brand-name {
  color: #34d399;
  margin-right: 16px;
}

.brand-role {
  color: #f3f4f6;
  font-weight: 600;
}

.nav-links {
  display: flex;
  align-items: center;
  font-size: 14px;
  font-weight: 600;
}

.nav-link {
  display: flex;
  align-items: center;
  gap: 10px;
  height: 42px;
  padding: 0 14px;
  margin-right: 14px;
  border-radius: 6px;
  color: #d1d5db;
}

.nav-link.active {
  color: #34d399;
  background: rgba(52, 211, 153, 0.15);
}

.nav-user {
  margin-right: 0;
  padding-left: 7px;
}

.icon {
  height: 15px;
  fill: currentColor;
}

.icon-wide {
  width: 20px;
}

.caret {
  border: 4px solid transparent;
  border-top-color: currentColor;
  border-bottom: 0;
}

.logout {
  display: flex;
  align-items: center;
  gap: 8px;
  height: 36px;
  padding: 0 11px;
  border: 1px solid #f87171;
  border-radius: 6px;
  background: transparent;
  color: #9ca3af;
  font-weight: 600;
}

/* layout */
.container {
  display: grid;
  grid-template-columns: 3fr 2fr;
  gap: 30px;
  max-width: 1400px;
  margin: 21px auto 0;
}

.card {
  min-width: 0;
  padding: 30px;
  background: #384050;
  border-radius: 12px;
  box-shadow: 0 8px 24px rgba(0, 0, 0, 0.3);
}

.card-title {
  display: flex;
  align-items: center;
  gap: 9px;
  margin: 0 0 16px;
  padding-bottom: 8px;
  border-bottom: 1px solid #5a6b7d;
  color: #34d399;
  font-size: 24px;
  font-weight: 600;
  line-height: 33px;
}

.title-icon {
  width: 29px;
  height: 26px;
  fill: currentColor;
}

.title-icon-file {
  width: 20px;
}

/* map */
.help {
  margin: 0;
  color: #9ca3af;
  font-size: 13px;
  line-height: 20px;
}

.help-icon {
  width: 14px;
  height: 14px;
  margin: 0 -1px;
  fill: currentColor;
  vertical-align: -2px;
}

.help-icon.narrow {
  width: 11px;
}

.map {
  position: relative;
  height: 505px;
  border: 1px solid #64748b;
  border-radius: 8px;
  overflow: hidden;
}

.map-tiles {
  display: block;
  width: 100%;
  height: 100%;
  font-family: "Noto Sans", sans-serif;
  font-size: 30px;
}

.map-tiles g {
  stroke-linejoin: round;
}

.river { fill: none; stroke: #aad3df; stroke-width: 6; }
.road-casing { fill: none; stroke: #bbb; stroke-width: 8; }
.road-minor { fill: none; stroke: #fff; stroke-width: 5; }
.street { fill: none; stroke: #b5b5b5; stroke-width: 2; }
.park { fill: none; stroke: #6fae68; stroke-width: 13; opacity: 0.4; }
.limit-dark { fill: none; stroke: #8c9c88; stroke-width: 4; stroke-dasharray: 12 4 4 4; }
.limit { fill: none; stroke: #bda4bd; stroke-width: 4; stroke-dasharray: 14 5 4 5 4 5; }
.road-yellow-casing { fill: none; stroke: #c9cc74; stroke-width: 13; }
.road-yellow { fill: none; stroke: #f7fabf; stroke-width: 9; }
.road-orange-casing { fill: none; stroke: #e0a060; stroke-width: 13; }
.road-orange { fill: none; stroke: #fcd6a4; stroke-width: 9; }
.lift { fill: none; stroke: #666; stroke-width: 3; }
.pylon { fill: none; stroke: #000; stroke-width: 10; stroke-linecap: round; stroke-dasharray: 0 40; }
.tick { fill: none; stroke: #000; stroke-width: 4; }

.place text {
  text-anchor: middle;
  fill: #222;
  stroke: rgba(255, 255, 255, 0.7);
  stroke-width: 6px;
  paint-order: stroke;
}

.place .town {
  font-size: 38px;
}

.area-name {
  fill: #57694f;
  font-style: italic;
}

.glacier-name {
  fill: #4a90c8;
  font-style: italic;
}

.shield rect {
  fill: #f7e3cf;
  stroke: #dcae8c;
  stroke-width: 4;
}

.shield text {
  text-anchor: middle;
  fill: #5e3a12;
}

.shield-yellow rect {
  fill: #f1f2d4;
  stroke: #c5c592;
}

.shield-yellow text {
  fill: #475008;
}

.selection {
  fill: #34d399;
  fill-opacity: 0.3;
  stroke: #34d399;
  stroke-opacity: 0.6;
  stroke-width: 12;
}

.map-controls {
  position: absolute;
  top: 9px;
  left: 11px;
  display: flex;
  flex-direction: column;
  gap: 10px;
}

.map-bar {
  width: 33px;
  border: 2px solid rgba(0, 0, 0, 0.25);
  border-radius: 4px;
  background: #fff;
  background-clip: padding-box;
}

.map-bar button {
  display: flex;
  align-items: center;
  justify-content: center;
  width: 100%;
  height: 30px;
  padding: 0;
  border: 0;
  background: none;
}

.map-bar button + button {
  border-top: 1px solid #ccc;
}

.map-bar svg {
  width: 14px;
  height: 14px;
}

.attribution {
  position: absolute;
  right: 0;
  bottom: 0;
  padding: 0 5px;
  background: rgba(255, 255, 255, 0.8);
  color: #333;
  font-family: "Liberation Sans", Arial, sans-serif;
  font-size: 12px;
  line-height: 17px;
}

.attribution a {
  color: #0078a8;
}

.flag {
  width: 12px;
  height: 8px;
}

/* form */
.request {
  padding-top: 9px;
}

.requester {
  margin: 0 0 19px;
}

.field {
  margin: 0 0 16px;
  padding: 0;
  border: 0;
}

.label {
  display: block;
  margin-bottom: 8px;
  padding: 0;
  color: #d1d5db;
  font-size: 13px;
  font-weight: 600;
  line-height: 22px;
}

.radios {
  display: flex;
  gap: 4px;
}

.radios label {
  display: flex;
  align-items: center;
  gap: 4px;
}

.radios input {
  width: 13px;
  height: 13px;
  margin: 0 1px 0 0;
}

.control {
  display: block;
  width: 100%;
  height: 48px;
  padding: 0 14px;
  border: 1px solid #5a6b7d;
  border-radius: 8px;
  background: #4b5563;
  outline: none;
}

.control::placeholder {
  color: #30363d;
  opacity: 1;
}

.select-wrap, .date-wrap {
  position: relative;
}

.select {
  height: 38px;
  padding: 0 12px;
  border-radius: 6px;
  appearance: none;
}

.select-wrap::after {
  content: "";
  position: absolute;
  top: 16px;
  right: 16px;
  border: 5px solid transparent;
  border-top: 6px solid #d1d5db;
  border-bottom: 0;
  pointer-events: none;
}

.textarea {
  height: 85px;
  padding: 6px 12px;
  border-radius: 6px;
  line-height: 24px;
  resize: vertical;
}

.date::placeholder {
  color: #f3f4f6;
}

.date-button {
  position: absolute;
  top: 14px;
  right: 18px;
  width: 14px;
  height: 18px;
  padding: 0;
  border: 0;
  background: none;
}

.date-button svg {
  display: block;
  width: 14px;
  height: 16px;
}

.dropzone {
  display: flex;
  flex-direction: column;
  align-items: center;
  height: 94px;
  padding-top: 20px;
  gap: 9px;
  border: 2px dashed #5a6b7d;
  border-radius: 8px;
  background: #303948;
  color: #9ca3af;
  font-size: 13px;
  cursor: pointer;
}

.cloud {
  width: 27px;
  height: 19px;
  fill: currentColor;
}

.submit {
  display: flex;
  align-items: center;
  justify-content: center;
  gap: 8px;
  width: 100%;
  height: 54px;
  margin-top: 31px;
  border: 0;
  border-radius: 8px;
  background: linear-gradient(135deg, #34d399, #059669);
  color: #f3f4f6;
  font-size: 17px;
  font-weight: 700;
}

.check {
  width: 17px;
  height: 19px;
  fill: currentColor;
}

/* window chrome */
.scrollbar {
  display: flex;
  flex-direction: column;
  align-items: center;
  width: 15px;
  padding: 4px 0;
  background: #2c2c2c;
}

.arrow {
  border: 5px solid transparent;
}

.arrow-up {
  border-top: 0;
  border-bottom-color: #9f9f9f;
}

.arrow-down {
  border-bottom: 0;
  border-top-color: #9f9f9f;
}

.thumb {
  width: 9px;
  height: 88%;
  margin: 18px 0 auto;
  border-radius: 5px;
  background: #9f9f9f;
}

.taskbar {
  height: 2px;
  padding-left: 48px;
  background: #222;
}

.taskbar-item {
  display: block;
  width: 288px;
  height: 2px;
  background: #5a5a5a;
}
```
